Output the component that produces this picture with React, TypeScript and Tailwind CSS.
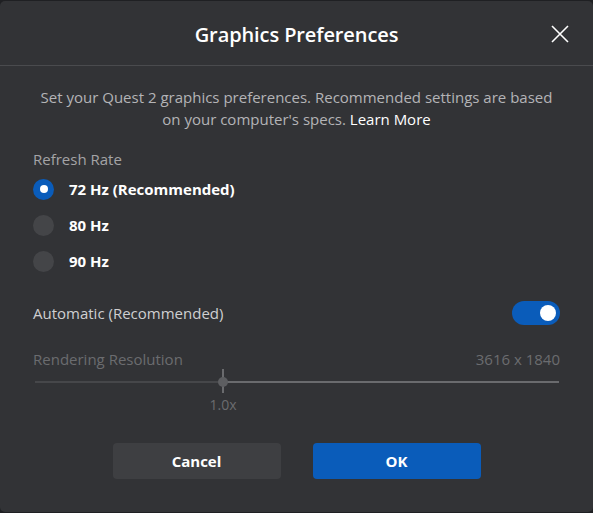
import React, { useState } from 'react';

const font = { fontFamily: '"Open Sans", "Noto Sans", sans-serif' };

export default function App() {
  const [rate, setRate] = useState('72');
  const [auto, setAuto] = useState(true);

  const rates = [
    { id: '72', label: '72 Hz (Recommended)' },
    { id: '80', label: '80 Hz' },
    { id: '90', label: '90 Hz' },
  ];

  return (
    <div className="w-[593px] h-[513px] bg-[#1f2023] pt-px" style={font}>
      <div className="h-[511px] bg-[#323336] rounded-[5px] flex flex-col">
        {/* Header */}
        <div className="h-[65px] border-b border-[#4a4b4e] flex items-center justify-center relative pt-[3px]">
          <h1 className="text-[20px] font-semibold text-white tracking-[-0.1px]">Graphics Preferences</h1>
          <button className="absolute right-[24px] top-[24px] w-[18px] h-[18px] text-white">
            <svg viewBox="0 0 18 18" width="18" height="18" fill="none" stroke="currentColor" strokeWidth="1.6">
              <path d="M1 1 L17 17 M17 1 L1 17" />
            </svg>
          </button>
        </div>

        {/* Body */}
        <div className="px-[33px] pt-[20px] flex-1 flex flex-col">
          <p className="text-[15px] leading-[22px] text-[#b4b4b6] text-center">
            Set your Quest 2 graphics preferences. Recommended settings are based
            <br />
            on your computer's specs. <span className="text-white font-medium">Learn More</span>
          </p>

          <div className="mt-[18px] text-[15px] text-[#a4a4a6] leading-[22px]">Refresh Rate</div>
          <div className="mt-[8px] flex flex-col gap-[14px]">
            {rates.map((r) => (
              <button key={r.id} onClick={() => setRate(r.id)} className="flex items-center gap-[15px] h-[22px]">
                <span
                  className={
                    rate === r.id
                      ? 'w-[21px] h-[21px] rounded-full bg-[#0a5cba] flex items-center justify-center'
                      : 'w-[21px] h-[21px] rounded-full bg-[#444548]'
                  }
                >
                  {rate === r.id && <span className="w-[8px] h-[8px] rounded-full bg-white" />}
                </span>
                <span className="text-[15px] font-bold text-white">{r.label}</span>
              </button>
            ))}
          </div>

          <div className="mt-[29px] flex items-center justify-between h-[24px]">
            <span className="text-[15px] text-[#cfcfd1]">Automatic (Recommended)</span>
            <button
              onClick={() => setAuto(!auto)}
              className="w-[48px] h-[24px] rounded-full bg-[#0a5cba] flex items-center justify-end px-[4px]"
            >
              <span className="w-[16px] h-[16px] rounded-full bg-white" />
            </button>
          </div>

          <div className="mt-[24px] flex items-center justify-between text-[15px] leading-[20px] text-[#6b6c6f]">
            <span>Rendering Resolution</span>
            <span>3616 x 1840</span>
          </div>

          <div className="relative h-[24px]">
            <div className="absolute left-[2px] top-[12px] w-[188px] h-[2px] bg-[#46474a]" />
            <div className="absolute left-[190px] top-[12px] w-[336px] h-[2px] bg-[#6a6b6e]" />
            <div className="absolute left-[189px] top-0 w-[2px] h-[24px] bg-[#6a6b6e]" />
            <div className="absolute left-[185px] top-[8px] w-[10px] h-[10px] rounded-full bg-[#5d5e61]" />
          </div>
          <div className="mt-[4px] w-[60px] ml-[160px] text-center text-[14px] text-[#6b6c6f] leading-[16px]">1.0x</div>

          <div className="mt-[30px] flex justify-center gap-[32px]">
            <button className="w-[168px] h-[36px] rounded-[4px] bg-[#3e3f42] text-white text-[15px] font-bold">Cancel</button>
            <button className="w-[168px] h-[36px] rounded-[4px] bg-[#0a5cba] text-white text-[15px] font-bold">OK</button>
          </div>
        </div>
      </div>
    </div>
  );
}
